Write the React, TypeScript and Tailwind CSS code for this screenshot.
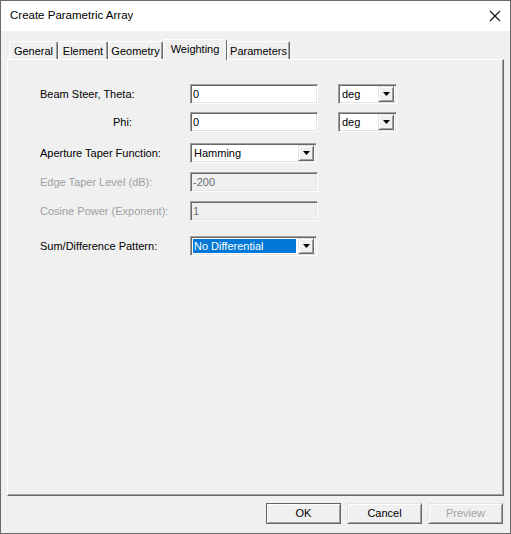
import React from 'react'

// classic 3D edges
const sunken =
  'border border-t-[#a0a0a0] border-l-[#a0a0a0] border-r-white border-b-white shadow-[inset_1px_1px_0_#696969,inset_-1px_-1px_0_#e3e3e3]'
const raised =
  'border border-t-[#e3e3e3] border-l-[#e3e3e3] border-r-[#696969] border-b-[#696969] shadow-[inset_1px_1px_0_#fff,inset_-1px_-1px_0_#a0a0a0]'

function DropArrow() {
  return (
    <div className={`w-[16px] h-[16px] shrink-0 bg-[#f0f0f0] flex items-center justify-center ${raised}`}>
      <svg width="7" height="4" viewBox="0 0 7 4" aria-hidden="true">
        <path d="M0 0h7L3.5 4z" fill="#000" />
      </svg>
    </div>
  )
}

function TextBox({ value, width = 'w-[128px]', disabled = false }: { value: string; width?: string; disabled?: boolean }) {
  return (
    <div
      className={`${width} h-[20px] flex items-center pl-[2px] ${sunken} ${
        disabled ? 'bg-[#f0f0f0] text-[#6d6d6d]' : 'bg-white text-black'
      }`}
    >
      {value}
    </div>
  )
}

function Combo({ value, width, selected = false }: { value: string; width: string; selected?: boolean }) {
  return (
    <div className={`${width} h-[20px] bg-white flex items-center p-[2px] gap-[2px] ${sunken}`}>
      <div
        className={`flex-1 h-[14px] flex items-center pl-[1px] ${
          selected ? 'bg-[#0078d7] text-white' : 'text-black'
        }`}
      >
        {value}
      </div>
      <DropArrow />
    </div>
  )
}

function Label({ children, disabled = false }: { children: React.ReactNode; disabled?: boolean }) {
  return (
    <div className={`w-[150px] shrink-0 ${disabled ? 'text-[#a0a0a0]' : 'text-black'}`}>{children}</div>
  )
}

function Button({ children, isDefault = false, disabled = false }: { children: React.ReactNode; isDefault?: boolean; disabled?: boolean }) {
  return (
    <div
      className={`w-[75px] h-[21px] flex items-center justify-center bg-[#f0f0f0] ${
        isDefault
          ? 'border border-[#646464] shadow-[inset_1px_1px_0_#fff,inset_-1px_-1px_0_#a0a0a0]'
          : raised
      } ${disabled ? 'text-[#a0a0a0]' : 'text-black'}`}
    >
      {children}
    </div>
  )
}

const TABS = [
  { name: 'General', w: 'w-[49px]' },
  { name: 'Element', w: 'w-[50px]' },
  { name: 'Geometry', w: 'w-[55px]' },
  { name: 'Weighting', w: 'w-[64px]', active: true },
  { name: 'Parameters', w: 'w-[63px]' },
]

export default function App() {
  return (
    <div
      className="w-[511px] h-[534px] flex flex-col border border-[#6a6a6a] bg-[#f0f0f0] text-[11px] leading-none"
      style={{ fontFamily: '"Liberation Sans", Arial, sans-serif' }}
    >
      {/* Title bar */}
      <div className="h-[30px] bg-white flex items-center justify-between pl-[9px] pr-[9px] shrink-0">
        <span className="text-[11.5px] text-black">Create Parametric Array</span>
        <svg width="12" height="12" viewBox="0 0 12 12" aria-hidden="true">
          <path d="M1 1L11 11M11 1L1 11" stroke="#111" strokeWidth="1.1" />
        </svg>
      </div>

      <div className="flex-1 flex flex-col pl-[6px] pr-[6px] pt-[8px]">
        {/* Tab strip */}
        <div className="h-[20px] flex items-end pl-[2px]">
          {TABS.map(t =>
            t.active ? (
              <div
                key={t.name}
                className={`${t.w} h-[21px] -mb-[1px] relative z-10 bg-[#f0f0f0] border-l border-t border-r border-l-white border-t-white border-r-[#696969] rounded-t-[2px] flex items-start justify-center pt-[4px] text-black`}
              >
                {t.name}
              </div>
            ) : (
              <div
                key={t.name}
                className={`${t.w} h-[18px] bg-[#f0f0f0] border-l border-t border-r border-l-white border-t-white border-r-[#696969] shadow-[inset_-1px_0_0_#a0a0a0] rounded-t-[2px] flex items-center justify-center pt-[2px] text-black`}
              >
                {t.name}
              </div>
            ),
          )}
        </div>

        {/* Tab page */}
        <div className="w-[497px] h-[437px] border border-t-white border-l-white border-r-[#696969] border-b-[#696969] shadow-[inset_-1px_-1px_0_#a0a0a0] pl-[32px] pt-[24px] flex flex-col">
          <div className="h-[20px] flex items-center">
            <Label>Beam Steer, Theta:</Label>
            <TextBox value="0" />
            <div className="ml-[20px]">
              <Combo value="deg" width="w-[59px]" />
            </div>
          </div>

          <div className="h-[20px] flex items-center mt-[8px]">
            <Label>
              <div className="w-[92px] text-right">Phi:</div>
            </Label>
            <TextBox value="0" />
            <div className="ml-[20px]">
              <Combo value="deg" width="w-[59px]" />
            </div>
          </div>

          <div className="h-[20px] flex items-center mt-[11px]">
            <Label>Aperture Taper Function:</Label>
            <Combo value="Hamming" width="w-[127px]" />
          </div>

          <div className="h-[20px] flex items-center mt-[9px]">
            <Label disabled>Edge Taper Level (dB):</Label>
            <TextBox value="-200" disabled />
          </div>

          <div className="h-[20px] flex items-center mt-[9px]">
            <Label disabled>Cosine Power (Exponent):</Label>
            <TextBox value="1" disabled />
          </div>

          <div className="h-[20px] flex items-center mt-[15px]">
            <Label>Sum/Difference Pattern:</Label>
            <Combo value="No Differential" width="w-[127px]" selected />
          </div>
        </div>

        {/* Dialog buttons */}
        <div className="flex justify-end gap-[6px] mt-[7px] pr-[1px]">
          <Button isDefault>OK</Button>
          <Button>Cancel</Button>
          <Button disabled>Preview</Button>
        </div>
      </div>
    </div>
  )
}
